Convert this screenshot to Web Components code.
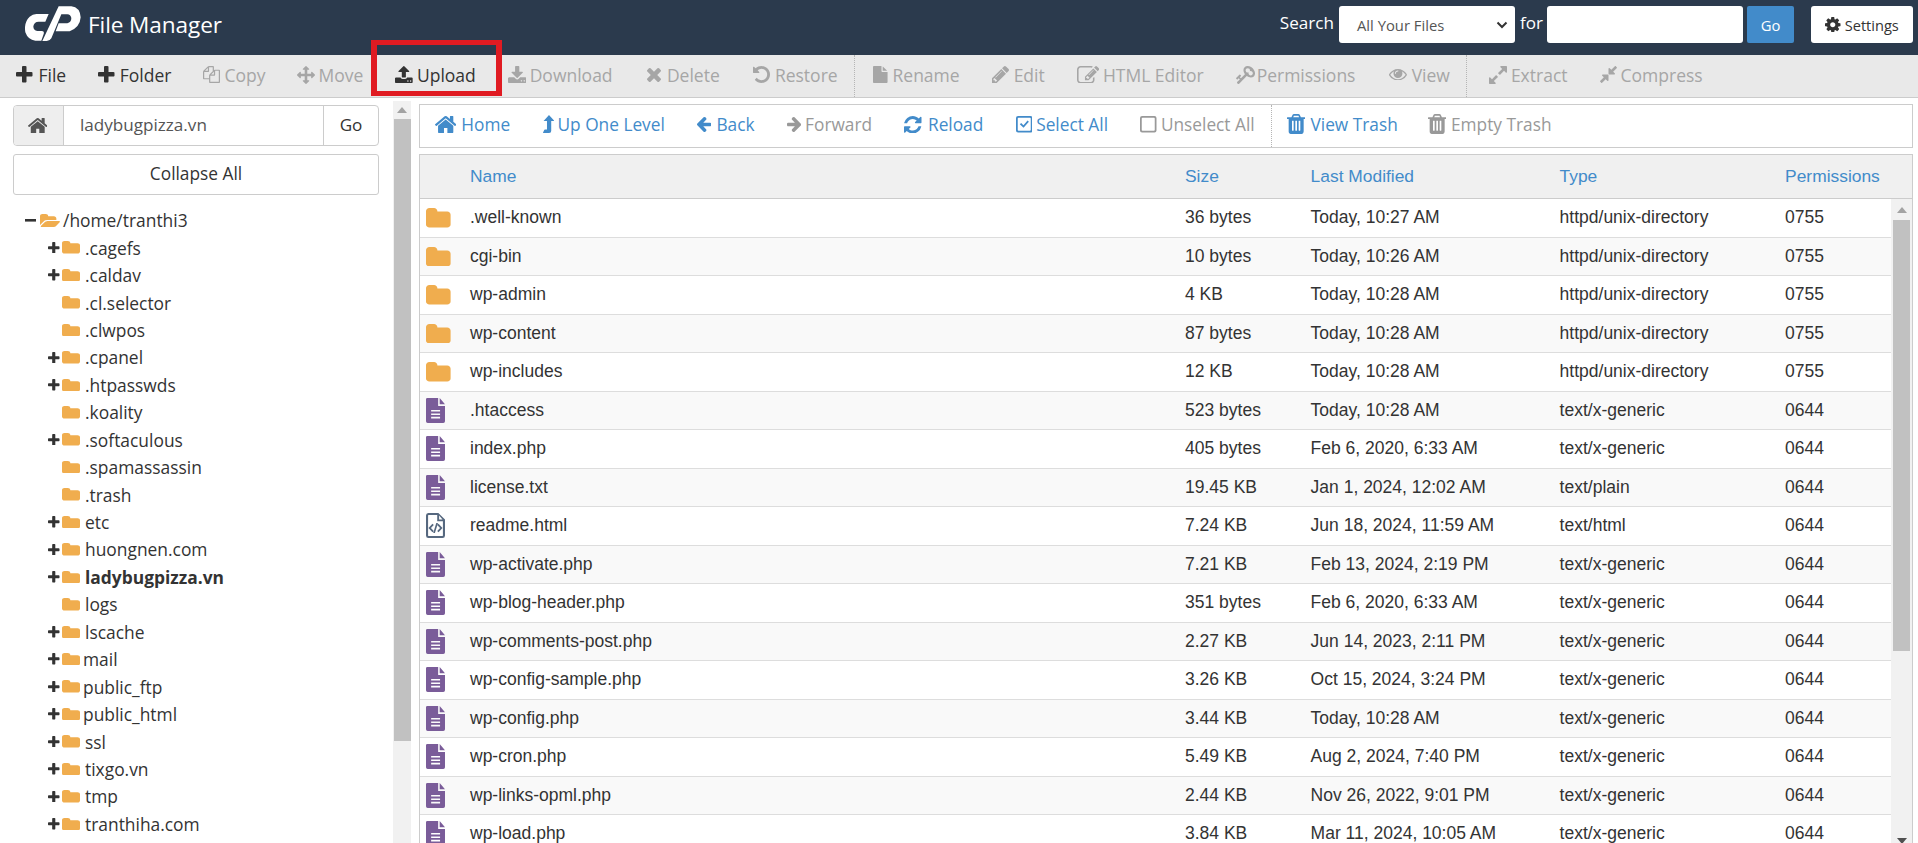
<!doctype html>
<html><head><meta charset="utf-8">
<style>
html,body{margin:0;height:843px;overflow:hidden;background:#fff}
fm-app{display:block}
</style></head><body>
<fm-app></fm-app>
<script>
const P={
plus:"M1600 736v192q0 40-28 68t-68 28h-416v416q0 40-28 68t-68 28h-192q-40 0-68-28t-28-68v-416h-416q-40 0-68-28t-28-68v-192q0-40 28-68t68-28h416v-416q0-40 28-68t68-28h192q40 0 68 28t28 68v416h416q40 0 68 28t28 68z",
minus:"M100 0H1300V300H100Z",
home:"M1472 992v480q0 26-19 45t-45 19h-384v-384h-256v384h-384q-26 0-45-19t-19-45v-480q0-1 .5-3t.5-3l575-474 575 474q1 2 1 6zm223-69l-62 74q-8 9-21 11h-3q-13 0-21-7l-692-577-692 577q-12 8-24 7-13-2-21-11l-62-74q-8-10-7-23.5t11-21.5l719-599q32-26 76-26t76 26l244 204v-195q0-14 9-23t23-9h192q14 0 23 9t9 23v408l219 182q10 8 11 21.5t-7 23.5z",
trash:"M704 1376v-704q0-14-9-23t-23-9h-64q-14 0-23 9t-9 23v704q0 14 9 23t23 9h64q14 0 23-9t9-23zm256 0v-704q0-14-9-23t-23-9h-64q-14 0-23 9t-9 23v704q0 14 9 23t23 9h64q14 0 23-9t9-23zm256 0v-704q0-14-9-23t-23-9h-64q-14 0-23 9t-9 23v704q0 14 9 23t23 9h64q14 0 23-9t9-23zm-544-992h448l-48-117q-7-9-17-11h-317q-10 2-17 11zm928 32v64q0 14-9 23t-23 9h-96v948q0 83-47 143.5t-113 60.5h-832q-66 0-113-58.5t-47-141.5v-952h-96q-14 0-23-9t-9-23v-64q0-14 9-23t23-9h309l70-167q15-37 54-63t79-26h320q40 0 79 26t54 63l70 167h309q14 0 23 9t9 23z",
cog:"M1152 896q0-106-75-181t-181-75-181 75-75 181 75 181 181 75 181-75 75-181zm512-109v222q0 12-8 23t-20 13l-185 28q-19 54-39 91 35 50 107 138 10 12 10 25t-9 23q-27 37-99 108t-94 71q-12 0-26-9l-138-108q-44 23-91 38-16 136-29 186-7 28-36 28h-222q-14 0-24.5-8.5t-11.5-21.5l-28-184q-49-16-90-37l-141 107q-10 9-25 9-14 0-25-11-126-114-165-168-7-10-7-23 0-12 8-23 15-21 51-66.5t54-70.5q-27-50-41-99l-183-27q-13-2-21-12.5t-8-23.5v-222q0-12 8-23t19-13l186-28q14-46 39-92-40-57-107-138-10-12-10-24 0-10 9-23 26-36 98.5-107.5t94.5-71.5q13 0 26 10l138 107q44-23 91-38 16-136 29-186 7-28 36-28h222q14 0 24.5 8.5t11.5 21.5l28 184q49 16 90 37l142-107q9-9 24-9 13 0 25 10 129 119 165 170 7 8 7 22 0 12-8 23-15 21-51 66.5t-54 70.5q26 50 41 98l183 28q13 2 21 12.5t8 23.5z",
upload:"M1344 1472q0-26-19-45t-45-19-45 19-19 45 19 45 45 19 45-19 19-45zm256 0q0-26-19-45t-45-19-45 19-19 45 19 45 45 19 45-19 19-45zm128-224v320q0 40-28 68t-68 28h-1472q-40 0-68-28t-28-68v-320q0-40 28-68t68-28h427q21 56 70.5 92t110.5 36h256q61 0 110.5-36t70.5-92h427q40 0 68 28t28 68zm-325-648q-17 40-59 40h-256v448q0 26-19 45t-45 19h-256q-26 0-45-19t-19-45v-448h-256q-42 0-59-40-17-39 14-69l448-448q18-19 45-19t45 19l448 448q31 30 14 69z",
download:"M1344 1344q0-26-19-45t-45-19-45 19-19 45 19 45 45 19 45-19 19-45zm256 0q0-26-19-45t-45-19-45 19-19 45 19 45 45 19 45-19 19-45zm128-224v320q0 40-28 68t-68 28h-1472q-40 0-68-28t-28-68v-320q0-40 28-68t68-28h465l135 136q58 56 136 56t136-56l136-136h464q40 0 68 28t28 68zm-325-569q17 41-14 70l-448 448q-18 19-45 19t-45-19l-448-448q-31-29-14-70 17-39 59-39h256v-448q0-26 19-45t45-19h256q26 0 45 19t19 45v448h256q42 0 59 39z",
copy:"M1696 384q40 0 68 28t28 68v1216q0 40-28 68t-68 28h-960q-40 0-68-28t-28-68v-288h-544q-40 0-68-28t-28-68v-672q0-40 20-88t48-76l408-408q28-28 76-48t88-20h416q40 0 68 28t28 68v328q68-40 128-40h416zm-544 213l-299 299h299v-299zm-640-384l-299 299h299v-299zm196 647l316-316v-416h-384v416q0 40-28 68t-68 28h-416v640h512v-256q0-40 20-88t48-76zm956 804v-1152h-384v416q0 40-28 68t-68 28h-416v640h896z",
move:"M1792 896q0 26-19 45l-256 256q-19 19-45 19t-45-19-19-45v-128h-384v384h128q26 0 45 19t19 45-19 45l-256 256q-19 19-45 19t-45-19l-256-256q-19-19-19-45t19-45 45-19h128v-384h-384v128q0 26-19 45t-45 19-45-19l-256-256q-19-19-19-45t19-45l256-256q19-19 45-19t45 19 19 45v128h384v-384h-128q-26 0-45-19t-19-45 19-45l256-256q19-19 45-19t45 19l256 256q19 19 19 45t-19 45-45 19h-128v384h384v-128q0-26 19-45t45-19 45 19l256 256q19 19 19 45z",
times:"M1490 1322q0 40-28 68l-136 136q-28 28-68 28t-68-28l-294-294-294 294q-28 28-68 28t-68-28l-136-136q-28-28-28-68t28-68l294-294-294-294q-28-28-28-68t28-68l136-136q28-28 68-28t68 28l294 294 294-294q28-28 68-28t68 28l136 136q28 28 28 68t-28 68l-294 294 294 294q28 28 28 68z",
undo:"M1664 896q0 156-61 298t-164 245-245 164-298 61q-172 0-327-72.5t-264-204.5q-7-10-6.5-22.5t8.5-20.5l137-138q10-9 25-9 16 2 23 12 73 95 179 147t225 52q104 0 198.5-40.5t163.5-109.5 109.5-163.5 40.5-198.5-40.5-198.5-109.5-163.5-163.5-109.5-198.5-40.5q-98 0-188 35.5t-160 101.5l137 138q31 30 14 69-17 40-59 40h-448q-26 0-45-19t-19-45v-448q0-42 40-59 39-17 69 14l130 129q107-101 244.5-156.5t284.5-55.5q156 0 298 61t245 164 164 245 61 298z",
file:"M1152 512v-472q22 14 36 28l408 408q14 14 28 36h-472zm-128 32q0 40 28 68t68 28h544v1056q0 40-28 68t-68 28h-1344q-40 0-68-28t-28-68v-1600q0-40 28-68t68-28h800v544z",
pencil:"M491 1536l91-91-235-235-91 91v107h128v128h107zm523-928q0-22-22-22-10 0-17 7l-542 542q-7 7-7 17 0 22 22 22 10 0 17-7l542-542q7-7 7-17zm-54-192l416 416-832 832h-416v-416zm683 96q0 53-37 90l-166 166-416-416 166-165q36-38 90-38 53 0 91 38l235 234q37 39 37 91z",
edit:"M888 1184l116-116-152-152-116 116v56h96v96h56zm440-720q-16-16-33 1l-350 350q-17 17-1 33t33-1l350-350q17-17 1-33zm80 594v190q0 119-84.5 203.5t-203.5 84.5h-832q-119 0-203.5-84.5t-84.5-203.5v-832q0-119 84.5-203.5t203.5-84.5h832q63 0 117 25 15 7 18 23 3 17-9 29l-49 49q-14 14-32 8-23-6-45-6h-832q-66 0-113 47t-47 113v832q0 66 47 113t113 47h832q66 0 113-47t47-113v-126q0-13 9-22l64-64q15-15 35-7t20 29zm-96-738l288 288-672 672h-288v-288zm444 132l-92 92-288-288 92-92q28-28 68-28t68 28l152 152q28 28 28 68t-28 68z",
key:"M832 512q0-80-56-136t-136-56-136 56-56 136q0 42 19 83-41-19-83-19-80 0-136 56t-56 136 56 136 136 56 136-56 56-136q0-42-19-83 41 19 83 19 80 0 136-56t56-136zm851 704q0 17-49 66t-66 49q-9 0-28.5-16t-36.5-33-38.5-40-24.5-26l-96 96 220 220q28 28 28 68 0 42-39 81t-81 39q-40 0-68-28l-671-671q-176 131-365 131-163 0-265.5-102.5t-102.5-265.5q0-160 95-313t248-248 313-95q163 0 265.5 102.5t102.5 265.5q0 189-131 365l355 355 96-96q-2-3-26-24.5t-40-38.5-33-36.5-16-28.5q0-17 49-66t66-49q13 0 23 10 6 6 46 44.5t82 79.5 86.5 86 73 78 28.5 41z",
eye:"M1664 960q-152-236-381-353 61 104 61 225 0 185-131.5 316.5t-316.5 131.5-316.5-131.5-131.5-316.5q0-121 61-225-229 117-381 353 133 205 333.5 326.5t434.5 121.5 434.5-121.5 333.5-326.5zm-720-384q0-20-14-34t-34-14q-125 0-214.5 89.5t-89.5 214.5q0 20 14 34t34 14 34-14 14-34q0-86 61-147t147-61q20 0 34-14t14-34zm848 384q0 34-20 69-140 230-376.5 368.5t-499.5 138.5-499.5-139-376.5-368q-20-35-20-69t20-69q140-229 376.5-368t499.5-139 499.5 139 376.5 368q20 35 20 69z",
expand:"M883 1056q0 13-10 23l-332 332 144 144q19 19 19 45t-19 45-45 19h-448q-26 0-45-19t-19-45v-448q0-26 19-45t45-19 45 19l144 144 332-332q10-10 23-10t23 10l114 114q10 10 10 23zm781-864v448q0 26-19 45t-45 19-45-19l-144-144-332 332q-10 10-23 10t-23-10l-114-114q-10-10-10-23t10-23l332-332-144-144q-19-19-19-45t19-45 45-19h448q26 0 45 19t19 45z",
compress:"M896 960v448q0 26-19 45t-45 19-45-19l-144-144-332 332q-10 10-23 10t-23-10l-114-114q-10-10-10-23t10-23l332-332-144-144q-19-19-19-45t19-45 45-19h448q26 0 45 19t19 45zm755-672q0 13-10 23l-332 332 144 144q19 19 19 45t-19 45-45 19h-448q-26 0-45-19t-19-45v-448q0-26 19-45t45-19 45 19l144 144 332-332q10-10 23-10t23 10l114 114q10 10 10 23z",
left:"M1664 896v128q0 53-32.5 90.5t-84.5 37.5h-704l293 294q38 36 38 90t-38 90l-75 76q-37 37-90 37-52 0-91-37l-651-652q-37-37-37-90 0-52 37-91l651-650q38-38 91-38 52 0 90 38l75 74q38 38 38 91t-38 91l-293 293h704q52 0 84.5 37.5t32.5 90.5z",
right:"M1600 960q0 54-37 91l-651 651q-39 37-91 37-51 0-90-37l-75-75q-38-38-38-91t38-91l293-293h-704q-52 0-84.5-37.5t-32.5-90.5v-128q0-53 32.5-90.5t84.5-37.5h704l-293-294q-38-36-38-90t38-90l75-75q38-38 90-38 53 0 91 38l651 651q37 35 37 90z",
up:"M640 0 L1150 560 H850 V1500 Q850 1700 650 1700 H100 Q60 1700 80 1650 L190 1420 Q210 1380 250 1380 H450 V560 H130 Z",
refresh:"M1639 1056q0 5-1 7-64 268-268 434.5t-478 166.5q-146 0-282.5-55t-243.5-157l-129 129q-19 19-45 19t-45-19-19-45v-448q0-26 19-45t45-19h448q26 0 45 19t19 45-19 45l-137 137q71 66 161 102t187 36q134 0 250-65t186-179q11-17 53-117 8-23 30-23h192q13 0 22.5 9.5t9.5 22.5zm25-800v448q0 26-19 45t-45 19h-448q-26 0-45-19t-19-45 19-45l138-138q-148-137-349-137-134 0-250 65t-186 179q-11 17-53 117-8 23-30 23h-199q-13 0-22.5-9.5t-9.5-22.5v-7q65-268 270-434.5t480-166.5q146 0 284 55.5t245 156.5l130-129q19-19 45-19t45 19 19 45z",
check:"M200 0H1400Q1600 0 1600 200V1400Q1600 1600 1400 1600H200Q0 1600 0 1400V200Q0 0 200 0ZM250 170Q170 170 170 250V1350Q170 1430 250 1430H1350Q1430 1430 1430 1350V250Q1430 170 1350 170ZM370 800L500 670 720 890 1120 430 1250 550 730 1150Z",
box:"M200 0H1400Q1600 0 1600 200V1400Q1600 1600 1400 1600H200Q0 1600 0 1400V200Q0 0 200 0ZM250 170Q170 170 170 250V1350Q170 1430 250 1430H1350Q1430 1430 1430 1350V250Q1430 170 1350 170Z",
folder:"M1728 608v704q0 92-66 158t-158 66h-1216q-92 0-158-66t-66-158v-960q0-92 66-158t158-66h320q92 0 158 66t66 158v32h672q92 0 158 66t66 158z",
folderopen:"M1845 931q0 35-32 71l-336 396q-43 51-120.5 86.5t-143.5 35.5h-1088q-34 0-60.5-13t-26.5-43q0-35 32-71l336-396q43-51 120.5-86.5t143.5-35.5h1088q34 0 60.5 13t26.5 43zm-343-344v160h-832q-94 0-197 47.5t-164 119.5l-337 396-5 6q0-4-.5-12.5t-.5-12.5v-960q0-92 66-158t158-66h320q92 0 158 66t66 158v32h544q92 0 158 66t66 158z",
doc:"M70 0H640V410H1000V1210Q1000 1300 910 1300H90Q0 1300 0 1210V70Q0 0 70 0ZM270 620V700H740V620ZM270 800V880H740V800ZM270 980V1060H740V980ZM720 0L1000 320H720Z",
code:"M120 0H650L1000 340V1170Q1000 1300 870 1300H130Q0 1300 0 1170V130Q0 0 120 0ZM130 110Q110 110 110 130V1170Q110 1190 130 1190H870Q890 1190 890 1170V430H590V110ZM690 130V340H870ZM340 560L410 620 260 780 410 940 340 1000 130 780ZM660 560L870 780 660 1000 590 940 740 780 590 620ZM540 520H630L470 1040H380Z"
};

class FmIcon extends HTMLElement{
  constructor(){super();this.attachShadow({mode:'open'})}
  connectedCallback(){
    const d=P[this.getAttribute('n')],h=+this.getAttribute('h')||16,fw=this.getAttribute('w');
    const flip=this.getAttribute('n')==='key'?'transform:scaleX(-1);':'';
    this.shadowRoot.innerHTML=`<style>:host{display:block;flex:none;line-height:0}svg{display:block;${flip}}</style><svg preserveAspectRatio="${fw?'none':'xMidYMid meet'}" aria-hidden="true"><path fill="currentColor" fill-rule="evenodd" d="${d}"/></svg>`;
    const s=this.shadowRoot.querySelector('svg'),b=s.querySelector('path').getBBox();
    s.setAttribute('viewBox',`${b.x} ${b.y} ${b.width} ${b.height}`);
    s.setAttribute('height',h);
    s.setAttribute('width',fw||(h*b.width/b.height));
  }
}
customElements.define('fm-icon',FmIcon);

class FmHeader extends HTMLElement{
  constructor(){super();this.attachShadow({mode:'open'})}
  connectedCallback(){this.shadowRoot.innerHTML=`<style>
:host{display:flex;align-items:center;height:55px;background:#2b3a4d;color:#fff;font-family:"Open Sans",sans-serif;box-sizing:border-box}
.logo{margin-left:25px;flex:none;display:block;margin-top:-6px}
.t{font-size:22.6px;margin-left:5px;margin-top:-6px;letter-spacing:-.1px}
.s{margin-left:auto;display:flex;align-items:center;padding-right:5px;margin-top:-6px}
.lb{font-size:17.1px;line-height:37px;margin-top:-4px}
.sel{width:176px;height:37px;background:#fff;border-radius:3px;margin:0 5px 0 5px;color:#555;font-size:14.8px;display:flex;align-items:center;justify-content:space-between;padding:0 7px 0 18px;box-sizing:border-box}
.in{width:196px;height:37px;background:#fff;border-radius:3px;margin-left:4px;box-sizing:border-box}
.go{width:47px;height:37px;background:#428bca;border-radius:2px;margin-left:4px;display:flex;align-items:center;justify-content:center;font-size:14.8px}
.set{width:102px;height:37px;background:#fff;border-radius:3px;margin-left:17px;color:#333;font-size:14.6px;display:flex;align-items:center;justify-content:center;gap:4px}
</style>
<svg class="logo" width="58" height="40" viewBox="21 18 174 120" aria-hidden="true"><path fill="#fff" d="M55 45H92L82 68H62Q48 68 46 82Q46 95 58 96H72Q80 97 77 105L70 125H52Q30 123 22 100Q17 70 35 53Q44 45 55 45Z"/><path fill="#fff" d="M122 22H160Q186 25 188 55Q186 85 155 97H113L122 73H148Q160 70 160 57Q158 47 148 46H130L100 118Q95 127 84 126H73Z"/></svg>
<span class="t">File Manager</span>
<div class="s"><span class="lb">Search</span><div class="sel"><span>All Your Files</span><svg width="12" height="8" viewBox="0 0 12 8"><path d="M1.5 1.5 6 6l4.5-4.5" fill="none" stroke="#333" stroke-width="2"/></svg></div><span class="lb">for</span><div class="in"></div><div class="go">Go</div><div class="set"><fm-icon n="cog" h="15.5"></fm-icon><span>Settings</span></div></div>`}
}
customElements.define('fm-header',FmHeader);

class FmTool extends HTMLElement{
  constructor(){super();this.attachShadow({mode:'open'})}
  connectedCallback(){
    const n=this.getAttribute('n'),h=this.getAttribute('h')||17,g=this.getAttribute('g')||4;
    const c=this.hasAttribute('off')?'var(--off,#a6a6a6)':'var(--on,#333)';
    this.shadowRoot.innerHTML=`<style>:host{display:flex;align-items:center;font-family:"Open Sans",sans-serif;font-size:var(--fs,17.5px);color:${c};gap:${g}px;white-space:nowrap;flex:none;padding-bottom:2px;box-sizing:border-box}fm-icon{margin-top:-1px}</style><fm-icon n="${n}" h="${h}"></fm-icon><slot></slot>`;
  }
}
customElements.define('fm-tool',FmTool);

class FmDivider extends HTMLElement{
  constructor(){super();this.attachShadow({mode:'open'})}
  connectedCallback(){this.shadowRoot.innerHTML=`<style>:host{display:block;align-self:stretch;border-left:1px dotted #b5b5b5;flex:none;margin:0 var(--dr,-13.7px) 0 -16px}</style>`}
}
customElements.define('fm-divider',FmDivider);

class FmToolbar extends HTMLElement{
  constructor(){super();this.attachShadow({mode:'open'})}
  connectedCallback(){this.shadowRoot.innerHTML=`<style>
:host{display:flex;align-items:stretch;height:43px;background:#e9e9e9;border-bottom:1px solid #ccc;box-sizing:border-box;position:relative;padding-left:16px;gap:32px}
.red{position:absolute;left:371px;top:-15px;width:131px;height:56px;border:solid #e01b22;border-width:5px 6px;box-sizing:border-box}
</style><slot></slot><div class="red"></div>`}
}
customElements.define('fm-toolbar',FmToolbar);

class FmNavbar extends HTMLElement{
  constructor(){super();this.attachShadow({mode:'open'})}
  connectedCallback(){this.shadowRoot.innerHTML=`<style>
:host{display:flex;align-items:stretch;height:43.5px;background:#fff;border:1px solid #ccc;box-sizing:border-box;padding-left:15px;gap:32.4px;--on:#428bca;--off:#999;--fs:17.3px;--dr:-17.3px}
</style><slot></slot>`}
}
customElements.define('fm-navbar',FmNavbar);

class FmScroll extends HTMLElement{
  constructor(){super();this.attachShadow({mode:'open'})}
  connectedCallback(){
    const a=+this.getAttribute('top'),t=+this.getAttribute('thumb'),pb=+this.getAttribute('pad')||0,w=this.getAttribute('w')||18,tw=this.getAttribute('tw')||17;
    this.shadowRoot.innerHTML=`<style>
:host{display:flex;flex-direction:column;background:#f1f1f1;box-sizing:border-box;flex:none;width:${w}px;align-items:center;padding-bottom:${pb}px}
.a{flex:none;display:flex;align-items:center;justify-content:center}
.th{width:${tw}px;background:#c1c1c1;flex:none;height:${t}px}
.sp{flex:1}
</style><div class="a" style="height:${a}px"><svg width="10" height="6" viewBox="0 0 10 6"><path d="M5 0 10 6H0Z" fill="#a3a3a3"/></svg></div><div class="th"></div><div class="sp"></div><div class="a" style="height:18px"><svg width="10" height="6" viewBox="0 0 10 6"><path d="M0 0H10L5 6Z" fill="#505050"/></svg></div>`;
  }
}
customElements.define('fm-scroll',FmScroll);

class FmPathBox extends HTMLElement{
  constructor(){super();this.attachShadow({mode:'open'})}
  connectedCallback(){this.shadowRoot.innerHTML=`<style>
:host{display:flex;height:41px;width:366px;border:1px solid #ccc;border-radius:4px;box-sizing:border-box;font-family:"Open Sans",sans-serif;font-size:17.1px;color:#333;overflow:hidden;background:#fff}
.h{width:50px;background:#eee;border-right:1px solid #ccc;display:flex;align-items:center;justify-content:center;color:#555;flex:none;padding-right:2px;box-sizing:border-box}
.i{flex:1;display:flex;align-items:center;padding:0 0 2px 16px;color:#555}
.g{width:55px;border-left:1px solid #ccc;display:flex;align-items:center;justify-content:center;box-sizing:border-box;flex:none;padding-bottom:2px}
</style><div class="h"><fm-icon n="home" h="15.5"></fm-icon></div><div class="i">ladybugpizza.vn</div><div class="g">Go</div>`}
}
customElements.define('fm-path-box',FmPathBox);

class FmButton extends HTMLElement{
  constructor(){super();this.attachShadow({mode:'open'})}
  connectedCallback(){this.shadowRoot.innerHTML=`<style>
:host{display:flex;height:41.5px;width:366px;border:1px solid #ccc;border-radius:3px;box-sizing:border-box;font-family:"Open Sans",sans-serif;font-size:17.3px;color:#333;align-items:center;justify-content:center;background:#fff;padding-bottom:2px}
</style><slot></slot>`}
}
customElements.define('fm-button',FmButton);

class FmTreeRow extends HTMLElement{
  constructor(){super();this.attachShadow({mode:'open'})}
  connectedCallback(){
    const root=this.hasAttribute('root'),pm=this.getAttribute('pm');
    const g=this.getAttribute('g')||5;
    this.shadowRoot.innerHTML=`<style>
:host{display:flex;align-items:center;height:27.45px;font-family:"Open Sans",sans-serif;font-size:17.4px;color:#333;white-space:nowrap;padding-left:${root?12:35}px;box-sizing:border-box}
.pm{width:${root?15:14}px;flex:none;display:flex}
.f{color:#f0ad4e;margin-right:${root?3:g}px}
:host([bold]){font-weight:700}
</style><div class="pm">${pm==='plus'?'<fm-icon n="plus" h="11.5"></fm-icon>':pm==='minus'?'<fm-icon n="minus" h="2.6" w="11"></fm-icon>':''}</div><fm-icon class="f" n="${root?'folderopen':'folder'}" h="${root?13:12.5}" w="${root?20:18}"></fm-icon><slot></slot>`;
  }
}
customElements.define('fm-tree-row',FmTreeRow);

const cols='grid-template-columns:50px 715px 125.6px 249px 225.5px 1fr';
class FmHead extends HTMLElement{
  constructor(){super();this.attachShadow({mode:'open'})}
  connectedCallback(){this.shadowRoot.innerHTML=`<style>
:host{display:grid;${cols};align-items:center;height:44px;background:#f0f0f0;border-bottom:1px solid #ccc;box-sizing:border-box;font-family:"Liberation Sans",sans-serif;font-size:17.4px;color:#428bca;flex:none}
</style><span></span><span>Name</span><span>Size</span><span>Last Modified</span><span>Type</span><span>Permissions</span>`}
}
customElements.define('fm-head',FmHead);

class FmRow extends HTMLElement{
  constructor(){super();this.attachShadow({mode:'open'})}
  connectedCallback(){
    const [n,s,m,t,p]=this.getAttribute('d').split('|'),k=this.getAttribute('k');
    const ic=k==='f'?'<fm-icon n="folder" h="19.5" w="24.6" style="color:#f0ad4e"></fm-icon>':k==='c'?'<fm-icon n="code" h="25" w="19" style="color:#56687f"></fm-icon>':'<fm-icon n="doc" h="25" w="19" style="color:#7a5c99"></fm-icon>';
    this.shadowRoot.innerHTML=`<style>
:host{display:grid;${cols};align-items:center;height:38.5px;border-bottom:1px solid #ddd;box-sizing:border-box;font-family:"Liberation Sans",sans-serif;font-size:17.5px;color:#333;white-space:nowrap;flex:none;background:#fff}
:host([alt]){background:#f9f9f9}
.i{padding-left:6px}
</style><div class="i">${ic}</div><span>${n}</span><span>${s}</span><span>${m}</span><span>${t}</span><span>${p}</span>`;
  }
}
customElements.define('fm-row',FmRow);

const tree=[['.cagefs',1],['.caldav',1],['.cl.selector',0],['.clwpos',0],['.cpanel',1],['.htpasswds',1],['.koality',0],['.softaculous',1],['.spamassassin',0],['.trash',0],['etc',1],['huongnen.com',1],['ladybugpizza.vn',1,'b'],['logs',0],['lscache',1],['mail',1,'s'],['public_ftp',1,'s'],['public_html',1,'s'],['ssl',1],['tixgo.vn',1],['tmp',1],['tranthiha.com',1]];
const D='httpd/unix-directory|0755',G='text/x-generic|0644';
const rows=[['f','.well-known|36 bytes|Today, 10:27 AM|'+D],['f','cgi-bin|10 bytes|Today, 10:26 AM|'+D],['f','wp-admin|4 KB|Today, 10:28 AM|'+D],['f','wp-content|87 bytes|Today, 10:28 AM|'+D],['f','wp-includes|12 KB|Today, 10:28 AM|'+D],
['d','.htaccess|523 bytes|Today, 10:28 AM|'+G],['d','index.php|405 bytes|Feb 6, 2020, 6:33 AM|'+G],['d','license.txt|19.45 KB|Jan 1, 2024, 12:02 AM|text/plain|0644'],['c','readme.html|7.24 KB|Jun 18, 2024, 11:59 AM|text/html|0644'],['d','wp-activate.php|7.21 KB|Feb 13, 2024, 2:19 PM|'+G],['d','wp-blog-header.php|351 bytes|Feb 6, 2020, 6:33 AM|'+G],['d','wp-comments-post.php|2.27 KB|Jun 14, 2023, 2:11 PM|'+G],['d','wp-config-sample.php|3.26 KB|Oct 15, 2024, 3:24 PM|'+G],['d','wp-config.php|3.44 KB|Today, 10:28 AM|'+G],['d','wp-cron.php|5.49 KB|Aug 2, 2024, 7:40 PM|'+G],['d','wp-links-opml.php|2.44 KB|Nov 26, 2022, 9:01 PM|'+G],['d','wp-load.php|3.84 KB|Mar 11, 2024, 10:05 AM|'+G]];

class FmApp extends HTMLElement{
  constructor(){super();this.attachShadow({mode:'open'})}
  connectedCallback(){this.shadowRoot.innerHTML=`<style>
:host{display:flex;flex-direction:column;height:843px;overflow:hidden}
.main{flex:1;display:flex;min-height:0}
.left{width:393px;flex:none;box-sizing:border-box;padding:7px 0 0 13px;display:flex;flex-direction:column;overflow:hidden}
.left fm-button{margin-top:7.5px}
.tree{margin-top:11.5px}
.ls{margin-top:3px}
.right{flex:none;width:1494px;margin-left:8px;display:flex;flex-direction:column;padding-top:6px;box-sizing:border-box}
.table{margin-top:6.5px;flex:1;min-height:0;border:1px solid #ccc;border-bottom:0;display:flex;flex-direction:column}
.body{flex:1;display:flex;min-height:0}
.list{flex:1;min-width:0;display:flex;flex-direction:column}
.rows{flex:1;min-height:0;overflow:hidden;display:flex;flex-direction:column}
.hs{height:4px;background:#f1f1f1;flex:none;padding-left:21px}
.hs i{display:block;height:100%;width:1417px;background:#c1c1c1}
.m2{margin-left:2.3px}.m1{margin-left:1.2px}.m13{margin-left:1.3px}.mn{margin-left:-2.5px}
</style>
<fm-header></fm-header>
<fm-toolbar>
<fm-tool n="plus" h="16.5" g="6">File</fm-tool>
<fm-tool n="plus" h="16.5" g="5">Folder</fm-tool>
<fm-tool off n="copy" h="17" g="4">Copy</fm-tool>
<fm-tool off n="move" h="18" g="3">Move</fm-tool>
<fm-tool n="upload" h="17" g="4">Upload</fm-tool>
<fm-tool off n="download" h="17" g="3.5">Download</fm-tool>
<fm-tool off class="m2" n="times" h="14" g="6">Delete</fm-tool>
<fm-tool off class="m1" n="undo" h="17" g="5">Restore</fm-tool>
<fm-divider></fm-divider>
<fm-tool off n="file" h="17" g="5">Rename</fm-tool>
<fm-tool off n="pencil" h="17" g="5">Edit</fm-tool>
<fm-tool off n="edit" h="17.5" g="4">HTML Editor</fm-tool>
<fm-tool off n="key" h="18" g="2">Permissions</fm-tool>
<fm-tool off class="m13" n="eye" h="11.5" g="5">View</fm-tool>
<fm-divider style="--dr:-10px"></fm-divider>
<fm-tool off n="expand" h="18" g="4">Extract</fm-tool>
<fm-tool off n="compress" h="17" g="4">Compress</fm-tool>
</fm-toolbar>
<div class="main">
<div class="left">
<fm-path-box></fm-path-box>
<fm-button>Collapse All</fm-button>
<div class="tree">
<fm-tree-row root pm="minus">/home/tranthi3</fm-tree-row>
${tree.map(([t,p,f])=>`<fm-tree-row ${p?'pm="plus"':''} ${f==='b'?'bold':''} ${f==='s'?'g="3"':''}>${t}</fm-tree-row>`).join('')}
</div>
</div>
<fm-scroll class="ls" top="18" thumb="622"></fm-scroll>
<div class="right">
<fm-navbar>
<fm-tool n="home" h="17" g="5">Home</fm-tool>
<fm-tool n="up" h="18" g="3.5">Up One Level</fm-tool>
<fm-tool n="left" h="15" g="5">Back</fm-tool>
<fm-tool off n="right" h="15" g="4">Forward</fm-tool>
<fm-tool n="refresh" h="17.5" g="6">Reload</fm-tool>
<fm-tool n="check" h="16.5" g="4">Select All</fm-tool>
<fm-tool off n="box" h="16.5" g="4">Unselect All</fm-tool>
<fm-divider></fm-divider>
<fm-tool n="trash" h="20" g="5">View Trash</fm-tool>
<fm-tool off class="mn" n="trash" h="20" g="5">Empty Trash</fm-tool>
</fm-navbar>
<div class="table">
<fm-head></fm-head>
<div class="body">
<div class="list">
<div class="rows">${rows.map(([k,d],i)=>`<fm-row k="${k}" d="${d}" ${i%2?'alt':''}></fm-row>`).join('')}</div>
<div class="hs"><i></i></div>
</div>
<fm-scroll top="21" thumb="431" pad="8" w="21" tw="17"></fm-scroll>
</div>
</div>
</div>
</div>`}
}
customElements.define('fm-app',FmApp);
</script>
</body></html>
